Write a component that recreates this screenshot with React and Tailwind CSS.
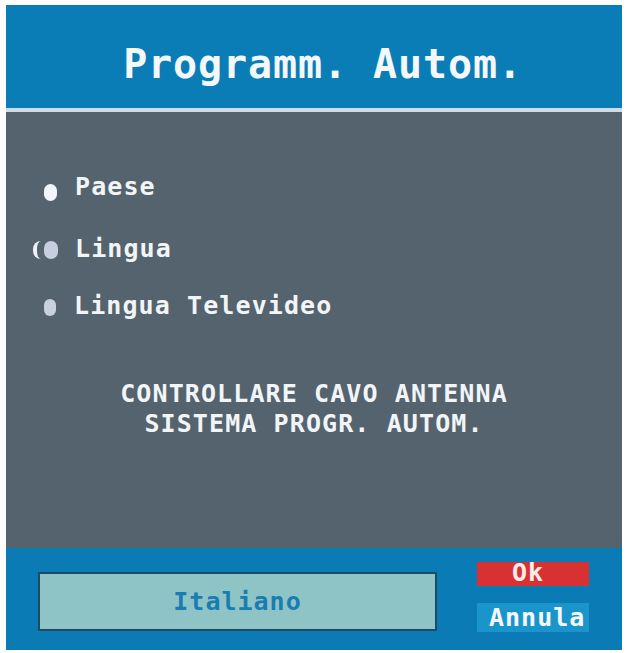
export default function App() {
  const mono = { fontFamily: '"DejaVu Sans Mono", "Liberation Mono", monospace' };

  return (
    <div className="w-[626px] h-[653px] bg-white pt-[5px] pl-[6px]" style={mono}>
      <div className="w-[616px] h-[645px] flex flex-col">
        {/* header */}
        <div className="h-[103px] bg-[#0a7db7] pt-[39px] pl-[18px] text-center">
          <h1 className="text-[40px] leading-[40px] font-bold tracking-[0.9px] text-[#f4f8fb]">
            Programm. Autom.
          </h1>
        </div>
        <div className="h-[4px] bg-[#cfdce5]" />

        {/* body */}
        <div className="h-[436px] bg-[#55636e] pt-[60px] text-[25px] leading-[30px] font-bold tracking-[1.1px] text-[#f2f5f8]">
          <div className="flex items-center pl-[27px]">
            <span className="w-[11px]" />
            <span className="w-[13px] h-[17px] mt-[10px] rounded-full bg-[#f2f5f9] blur-[0.6px]" />
            <span className="ml-[18px]">Paese</span>
          </div>
          <div className="flex items-center pl-[27px] mt-[32px]">
            <span className="w-[11px] flex">
              <span className="w-[8px] h-[18px] mt-[2px] rounded-l-full border-l-[4px] border-[#eef2f7] blur-[0.4px]" />
            </span>
            <span className="w-[14px] h-[18px] mt-[2px] rounded-full bg-[#c6cee0] blur-[0.6px]" />
            <span className="ml-[17px]">Lingua</span>
          </div>
          <div className="flex items-center pl-[27px] mt-[27px]">
            <span className="w-[11px]" />
            <span className="w-[12px] h-[17px] mt-[2px] rounded-full bg-[#c9d1de] blur-[0.6px]" />
            <span className="ml-[18px]">Lingua Televideo</span>
          </div>

          <div className="mt-[58px] text-center">
            <p>CONTROLLARE CAVO ANTENNA</p>
            <p>SISTEMA PROGR. AUTOM.</p>
          </div>
        </div>

        {/* footer */}
        <div className="h-[102px] bg-[#0a7bb4] flex items-start pt-[14px] pl-[32px] font-bold text-[25px] tracking-[1px]">
          <div className="w-[399px] h-[59px] mt-[10px] border-2 border-[#1d4b64] bg-[#8ec4c6] flex items-center justify-center text-[#1a7db2]">
            Italiano
          </div>
          <div className="ml-[40px] w-[112px] flex flex-col">
            <div className="h-[24px] bg-[#d83131] pl-[35px] leading-[22px] text-[#fbecec]">Ok</div>
            <div className="h-[29px] mt-[17px] bg-[#1995cc] pl-[12px] leading-[29px] text-[#f2f8fc]">Annula</div>
          </div>
        </div>
      </div>
    </div>
  );
}
